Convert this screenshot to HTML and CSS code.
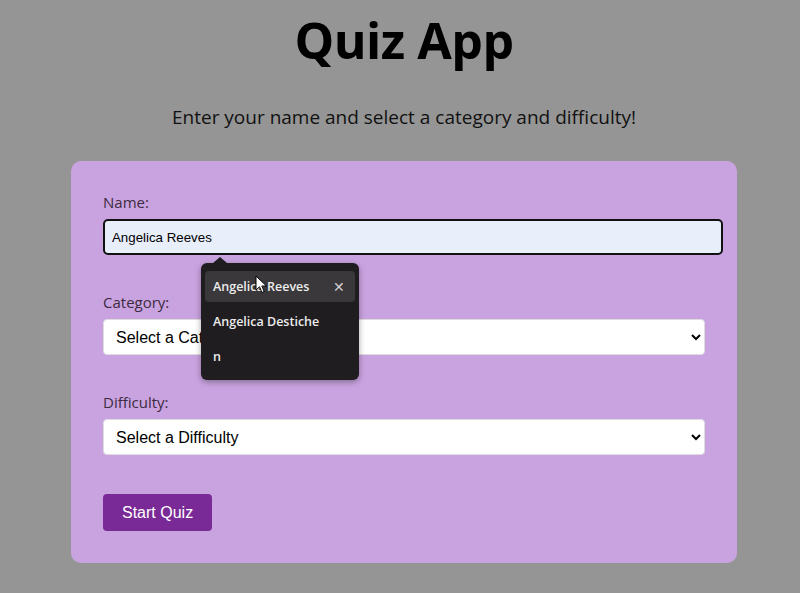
FILE: index.html
```html
<!DOCTYPE html>
<html lang="en">
<head>
<meta charset="utf-8">
<title>Quiz App</title>
<link rel="stylesheet" href="styles.css">
</head>
<body>
<main class="page">
  <h1 class="title">Quiz App</h1>
  <p class="subtitle">Enter your name and select a category and difficulty!</p>
  <form class="card">
    <div class="group name-group">
      <label class="label" for="name">Name:</label>
      <input class="name-input" id="name" type="text" value="Angelica Reeves">
      <div class="autofill">
        <div class="autofill-row active"><span>Angelica Reeves</span><span class="close">&#x2715;</span></div>
        <div class="autofill-row"><span>Angelica Destiche</span></div>
        <div class="autofill-row"><span>n</span></div>
        <svg class="cursor" width="13" height="19" viewBox="0 0 13 19"><path d="M1 1 L1 15 L4.5 11.8 L7 17.5 L9.2 16.5 L6.8 11 L11.5 11 Z" fill="#fff" stroke="#000" stroke-width="1" stroke-linejoin="round"/></svg>
      </div>
    </div>
    <div class="group">
      <label class="label" for="cat">Category:</label>
      <select class="select" id="cat"><option>Select a Category</option></select>
    </div>
    <div class="group">
      <label class="label" for="diff">Difficulty:</label>
      <select class="select" id="diff"><option>Select a Difficulty</option></select>
    </div>
    <button class="start" type="button">Start Quiz</button>
  </form>
</main>
</body>
</html>
```
FILE: styles.css
```css
html, body {
  margin: 0;
  padding: 0;
  background: #959595;
  font-family: "Open Sans", "Noto Sans", sans-serif;
}
.page {
  display: flex;
  flex-direction: column;
  align-items: center;
  padding: 6px 0 0 8px;
}
.title {
  margin: 0;
  font-size: 50px;
  font-weight: 700;
  line-height: 68px;
  color: #000;
  letter-spacing: -0.5px;
}
.subtitle {
  margin: 30px 0 0;
  font-size: 19px;
  line-height: 26px;
  color: #111;
}
.card {
  box-sizing: border-box;
  width: 666px;
  margin-top: 31px;
  padding: 30px 32px 32px;
  background: #c9a3e0;
  border-radius: 10px;
  display: flex;
  flex-direction: column;
  align-items: flex-start;
}
.group {
  width: 100%;
  margin-bottom: 36px;
  position: relative;
}
.label {
  display: block;
  font-size: 15px;
  line-height: 22px;
  color: #3d2b40;
  margin-bottom: 6px;
}
.name-input {
  box-sizing: content-box;
  width: 100%;
  height: 18px;
  padding: 7px 7px;
  border: 2px solid #111;
  border-radius: 5px;
  background: #e8eefa;
  font-family: "Liberation Sans", Arial, sans-serif;
  font-size: 13.3px;
  color: #000;
  outline: none;
}
.select {
  box-sizing: border-box;
  width: 100%;
  height: 36px;
  padding: 0 8px;
  border: 1px solid #ddd;
  border-radius: 4px;
  background: #fff;
  font-family: "Liberation Sans", Arial, sans-serif;
  font-size: 16px;
  color: #000;
}
.start {
  margin-top: 3px;
  height: 37px;
  padding: 0 19px;
  border: none;
  border-radius: 4px;
  background: #7a2a96;
  color: #fff;
  font-family: "Liberation Sans", Arial, sans-serif;
  font-size: 16px;
}
.autofill {
  position: absolute;
  left: 98px;
  top: 72px;
  width: 158px;
  box-sizing: border-box;
  padding: 8px 4px;
  background: #1f1d20;
  border-radius: 6px;
  box-shadow: 0 2px 6px rgba(0,0,0,0.35);
  display: flex;
  flex-direction: column;
  gap: 4px;
  z-index: 2;
}
.autofill::before {
  content: "";
  position: absolute;
  left: 12px;
  top: -6px;
  border-left: 7px solid transparent;
  border-right: 7px solid transparent;
  border-bottom: 6px solid #1f1d20;
}
.autofill-row {
  height: 31px;
  display: flex;
  align-items: center;
  justify-content: space-between;
  padding: 0 8px;
  border-radius: 4px;
  color: #ececec;
  font-size: 12.5px;
  font-weight: 600;
}
.autofill-row.active {
  background: #3a383b;
}
.close {
  font-weight: 400;
  font-size: 14px;
  color: #d0d0d0;
  margin-right: 2px;
}
.cursor {
  position: absolute;
  left: 54px;
  top: 12px;
}
```
